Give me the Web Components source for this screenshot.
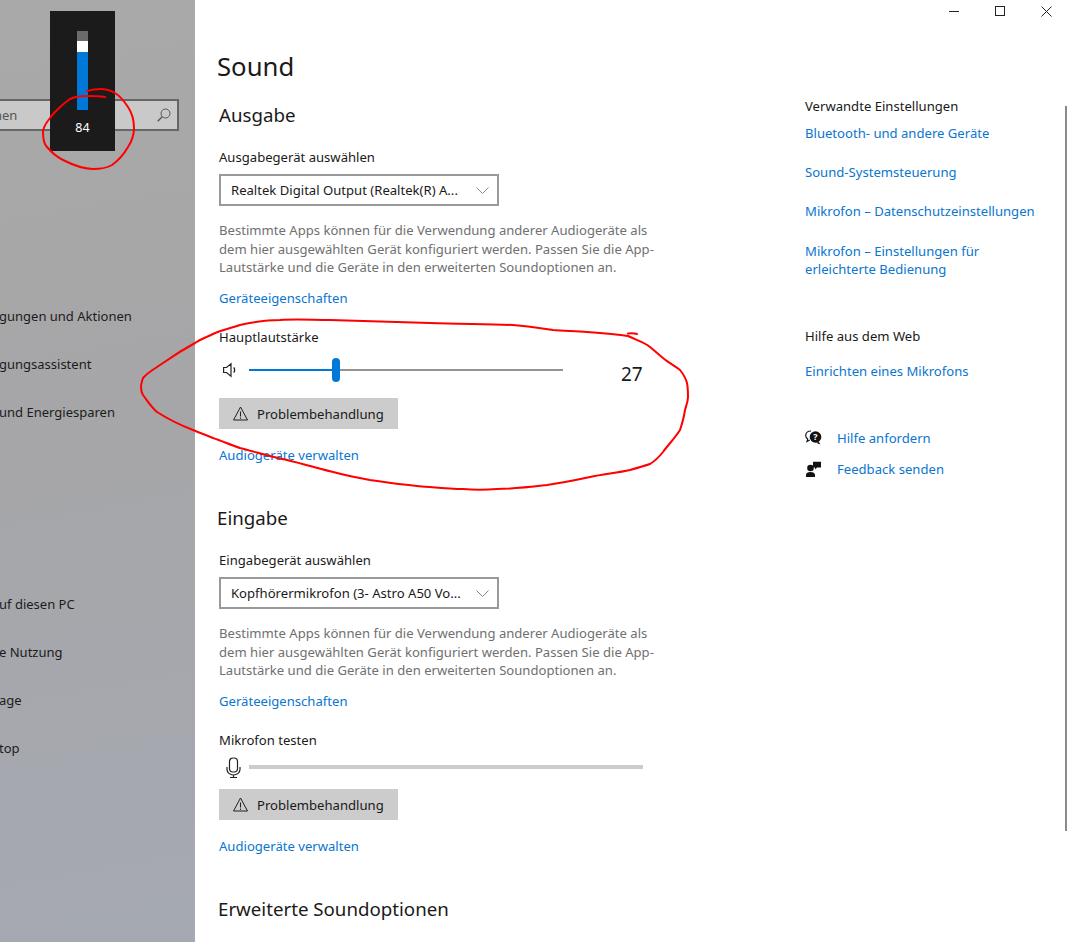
<!DOCTYPE html>
<html lang="de">
<head>
<meta charset="utf-8">
<title>Sound</title>
<style>
html, body { margin: 0; height: 100%; }
body { font-family: "Noto Sans", "Open Sans", sans-serif; color: #1a1a1a; background: #fff; overflow: hidden; }
</style>
</head>
<body>
<settings-window>
  <side-nav slot="nav"></side-nav>
  <sound-page slot="main"></sound-page>
  <related-links slot="aside"></related-links>
</settings-window>

<script>
const FONT = `"Noto Sans", "Open Sans", sans-serif`;

class SettingsWindow extends HTMLElement {
  constructor() {
    super();
    this.attachShadow({ mode: "open" }).innerHTML = `
      <style>
        :host { display: block; position: relative; width: 1067px; height: 942px; overflow: hidden; font-family: ${FONT}; }
        .win { display: grid; grid-template-columns: 195px 586px 1fr; height: 100%; }
        .caption { position: absolute; top: 0; right: -2px; display: flex; }
        .caption span { display: flex; width: 46px; height: 22px; align-items: center; justify-content: center; }
        .thumb { position: absolute; left: 1065px; top: 106px; width: 2px; height: 725px; background: #8a8a8a; }
        .flyout { position: absolute; left: 50px; top: 11px; width: 65px; height: 140px; background: #1b1b1b; color: #fff; font-size: 12.500px; text-align: center; }
        .track { position: absolute; left: 27px; top: 20px; width: 11px; height: 79px; background: #0078d7; }
        .rest { position: absolute; left: 0; top: 0; width: 11px; height: 10px; background: #6b6b6b; }
        .knob { position: absolute; left: 0; top: 10px; width: 11px; height: 11px; background: #fff; }
        .val { position: absolute; left: 0; right: 0; top: 108px; line-height: 18px; }
        .ink { position: absolute; left: 0; top: 0; pointer-events: none; }
      </style>
      <div class="win">
        <slot name="nav"></slot>
        <slot name="main"></slot>
        <slot name="aside"></slot>
      </div>
      <div class="caption">
        <span><svg width="10" height="10" viewBox="0 0 10 10"><path d="M0 5.500h10" stroke="#222" fill="none"/></svg></span>
        <span><svg width="10" height="10" viewBox="0 0 10 10"><rect x=".5" y=".5" width="9" height="9" stroke="#222" fill="none"/></svg></span>
        <span><svg width="11" height="11" viewBox="0 0 11 11"><path d="M.5.5l10 10M10.500.5l-10 10" stroke="#222" fill="none"/></svg></span>
      </div>
      <div class="thumb"></div>
      <div class="flyout">
        <div class="track"><div class="rest"></div><div class="knob"></div></div>
        <div class="val">84</div>
      </div>
      <svg class="ink" width="1067" height="942" fill="none" stroke="#f00" stroke-width="2" stroke-linecap="round" stroke-linejoin="round">
        <path d="M105 97C98 96 92 96 87 96C80 96 74 97 70 99C64 103 61 106 57 110C54 113 52 115 50 118C46 123 43 127 43 132C43 139 44 144 47 147C52 153 57 157 63 160C73 165 84 169 93 169C101 169 107 168 112 165C119 160 124 154 128 147C132 141 134 135 134 128C134 120 132 113 128 107C124 101 120 96 115 93C110 90 105 89 100 89C95 89 91 90 87 91"/>
        <path d="M628 336C636 340 644 342 650 347C655 351 658 354 663 358C669 363 675 366 680 370C684 375 686 379 687 383C688 388 688 392 688 397C688 402 686 406 685 410C684 417 682 424 680 430C675 438 668 445 663 452C659 457 655 461 650 464C644 466 637 468 630 470C617 473 603 474 590 477C576 480 561 483 547 485C530 487 514 489 497 489C485 490 474 490 463 489C451 489 441 488 430 487C409 486 390 483 370 480C359 478 348 476 337 473C320 469 304 464 287 460C271 457 256 452 240 448C231 445 222 441 213 438C206 435 200 433 193 430C180 425 168 419 157 412C151 407 147 400 143 395C141 392 141 390 141 387C141 384 142 381 143 378C148 372 156 368 163 363C173 356 184 349 195 343C201 339 207 337 213 334C222 330 231 328 240 325C254 322 267 320 280 320C297 319 313 320 330 320C363 321 397 322 430 323C458 324 486 324 513 325C527 326 540 328 553 330C564 331 576 331 587 332C601 333 615 334 628 336"/>
        <path d="M628 333.500C631 333 634 333 637 334"/>
      </svg>
    `;
  }
}

class SideNav extends HTMLElement {
  constructor() {
    super();
    this.attachShadow({ mode: "open" }).innerHTML = `
      <style>
        :host { display: block; height: 100%; overflow: hidden; background: linear-gradient(170deg, #a9a9a9 0%, #a6a6a8 45%, #a5a9b2 100%); font-size: 13px; color: #1c1c1c; }
        .search { display: flex; align-items: center; justify-content: space-between; box-sizing: border-box; width: 179px; height: 32px; margin-top: 99px; border: 2px solid #666; border-left: 0; background: #c9c9c9; color: #555; padding: 0 6px 0 0; }
        .search span { margin-left: -6px; }
        .group { display: flex; flex-direction: column; margin-left: -1px; }
        .group div { height: 48px; line-height: 48px; white-space: nowrap; }
        .one { margin-top: 161px; }
        .two { margin-top: 144px; }
      </style>
      <div class="search">
        <span>hen</span>
        <svg width="14" height="14" viewBox="0 0 14 14" fill="none" stroke="#555"><circle cx="8.500" cy="5.500" r="4.500"/><path d="M5.200 8.800L.7 13.300" stroke-width="1.300"/></svg>
      </div>
      <div class="group one">
        <div>gungen und Aktionen</div>
        <div>gungsassistent</div>
        <div>und Energiesparen</div>
      </div>
      <div class="group two">
        <div>uf diesen PC</div>
        <div>e Nutzung</div>
        <div>age</div>
        <div>top</div>
      </div>
    `;
  }
}

class SoundSelect extends HTMLElement {
  constructor() {
    super();
    this.attachShadow({ mode: "open" }).innerHTML = `
      <style>
        :host { display: flex; align-items: center; justify-content: space-between; box-sizing: border-box; width: 280px; height: 32px; border: 2px solid #999; padding: 0 8px 0 10px; font-size: 13.100px; white-space: nowrap; }
      </style>
      <slot></slot>
      <svg width="13" height="7" viewBox="0 0 13 7" fill="none" stroke="#888"><path d="M.5.5l6 6 6-6"/></svg>
    `;
  }
}

class TroubleButton extends HTMLElement {
  constructor() {
    super();
    this.attachShadow({ mode: "open" }).innerHTML = `
      <style>
        :host { display: flex; align-items: center; gap: 9px; box-sizing: border-box; width: 179px; height: 31px; background: #ccc; padding-left: 14px; font-size: 13.100px; }
      </style>
      <svg width="15" height="15" viewBox="0 0 15 15" fill="none" stroke="#222"><path d="M7.500 1L14.500 14H.5zM7.500 5.500v5M7.500 11.500v1.300"/></svg>
      <span>Problembehandlung</span>
    `;
  }
}

class BlueLink extends HTMLElement {
  constructor() {
    super();
    this.attachShadow({ mode: "open" }).innerHTML = `
      <style>
        :host { display: block; color: #0a76d0; font-size: 13.100px; line-height: 18px; }
      </style>
      <slot></slot>
    `;
  }
}

class SoundPage extends HTMLElement {
  constructor() {
    super();
    const note = `Bestimmte Apps können für die Verwendung anderer Audiogeräte als<br>dem hier ausgewählten Gerät konfiguriert werden. Passen Sie die App-<br>Lautstärke und die Geräte in den erweiterten Soundoptionen an.`;
    this.attachShadow({ mode: "open" }).innerHTML = `
      <style>
        :host { display: block; height: 100%; overflow: hidden; padding-left: 24px; font-size: 13.100px; }
        h1, h2 { margin: 0; font-weight: 400; }
        h1 { font-size: 25.700px; line-height: 36px; margin: 49px 0 0 -2px; }
        h2 { font-size: 18.700px; line-height: 26px; }
        .lbl { line-height: 18px; }
        .note { color: #707070; font-size: 13.100px; line-height: 18.500px; white-space: nowrap; margin-top: 15px; }
        sound-select { margin-top: 8px; }
        blue-link { margin-top: 12px; }
        trouble-button { margin-top: 16px; }
        .row { display: flex; align-items: center; height: 24px; margin-top: 12px; padding-left: 4px; }
        .row svg { flex: none; }
        .vol { position: relative; width: 314px; height: 2px; background: #939393; margin-left: 12px; }
        .vol i { display: block; width: 88px; height: 100%; background: #0078d7; }
        .vol b { position: absolute; left: 83px; top: -11px; width: 8px; height: 24px; border-radius: 4px; background: #0078d7; }
        .num { margin-left: 58px; font-size: 19px; line-height: 24px; position: relative; top: 4px; }
        .mic { width: 394px; height: 4px; background: #ccc; margin-left: 8px; }
        .trail { margin-top: 17px; }
      </style>
      <h1>Sound</h1>
      <h2 style="margin-top:17px">Ausgabe</h2>
      <div class="lbl" style="margin-top:20px">Ausgabegerät auswählen</div>
      <sound-select>Realtek Digital Output (Realtek(R) A...</sound-select>
      <div class="note">${note}</div>
      <blue-link style="margin-top:12.500px">Geräteeigenschaften</blue-link>
      <div class="lbl" style="margin-top:21px">Hauptlautstärke</div>
      <div class="row">
        <svg width="14" height="16" viewBox="0 0 14 16" fill="none" stroke="#222" stroke-width="1.200"><path d="M.6 5.500h2.900L8 1.800v12.400L3.500 10.500H.6zM10.800 5.300q1.800 2.700 0 5.400"/></svg>
        <div class="vol"><i></i><b></b></div>
        <div class="num">27</div>
      </div>
      <trouble-button></trouble-button>
      <blue-link class="trail">Audiogeräte verwalten</blue-link>
      <h2 style="margin:41px 0 0 -2px">Eingabe</h2>
      <div class="lbl" style="margin-top:20px">Eingabegerät auswählen</div>
      <sound-select>Kopfhörermikrofon (3- Astro A50 Vo...</sound-select>
      <div class="note">${note}</div>
      <blue-link style="margin-top:12.500px">Geräteeigenschaften</blue-link>
      <div class="lbl" style="margin-top:21px">Mikrofon testen</div>
      <div class="row" style="margin-top:6px;padding-left:7px">
        <svg width="15" height="21" viewBox="0 0 15 21" fill="none" stroke="#222" stroke-width="1.200"><rect x="3.500" y="1" width="8" height="14" rx="3.500"/><path d="M1 10v2.500a6.500 5.500 0 0 0 13 0V10M7.500 18v2.500M4 20.500h7"/></svg>
        <div class="mic"></div>
      </div>
      <trouble-button style="margin-top:10px"></trouble-button>
      <blue-link class="trail">Audiogeräte verwalten</blue-link>
      <h2 style="margin:41px 0 0 -1px">Erweiterte Soundoptionen</h2>
    `;
  }
}

class RelatedLinks extends HTMLElement {
  constructor() {
    super();
    this.attachShadow({ mode: "open" }).innerHTML = `
      <style>
        :host { display: block; padding: 97px 0 0 24px; font-size: 13.100px; }
        .t { line-height: 18px; }
        blue-link { margin-top: 21px; }
        .t + blue-link { margin-top: 9px; }
        .help { display: flex; align-items: center; gap: 15px; color: #0a76d0; line-height: 18px; }
        .help svg { flex: none; }
      </style>
      <div class="t">Verwandte Einstellungen</div>
      <blue-link>Bluetooth- und andere Geräte</blue-link>
      <blue-link>Sound-Systemsteuerung</blue-link>
      <blue-link>Mikrofon – Datenschutzeinstellungen</blue-link>
      <blue-link style="margin-top:22px">Mikrofon – Einstellungen für<br>erleichterte Bedienung</blue-link>
      <div class="t" style="margin-top:49px">Hilfe aus dem Web</div>
      <blue-link style="margin-top:17px">Einrichten eines Mikrofons</blue-link>
      <div class="help" style="margin-top:49px">
        <svg width="17" height="16" viewBox="0 0 17 16"><path d="M6 1C3 1 .7 3 .7 5.500c0 1.500.8 2.800 2 3.600L2 11.500l2.700-1.500" fill="none" stroke="#111" stroke-width="1.200"/><circle cx="10.500" cy="7" r="5.800" fill="#111"/><path d="M13.500 11.500l2 3-4-1.500z" fill="#111"/><text x="10.500" y="10" text-anchor="middle" font-size="9" font-weight="700" fill="#fff" font-family="Noto Sans">?</text></svg>
        <span>Hilfe anfordern</span>
      </div>
      <div class="help" style="margin-top:13px">
        <svg width="17" height="16" viewBox="0 0 17 16" fill="#111"><circle cx="5.500" cy="7" r="3.300"/><path d="M1 16v-2c0-2 1.800-3 4.500-3s4.500 1 4.500 3v2zM8 .8h8v5.700h-4l-2 2v-2H8z"/></svg>
        <span>Feedback senden</span>
      </div>
    `;
  }
}

customElements.define("sound-select", SoundSelect);
customElements.define("trouble-button", TroubleButton);
customElements.define("blue-link", BlueLink);
customElements.define("side-nav", SideNav);
customElements.define("sound-page", SoundPage);
customElements.define("related-links", RelatedLinks);
customElements.define("settings-window", SettingsWindow);
</script>
</body>
</html>
